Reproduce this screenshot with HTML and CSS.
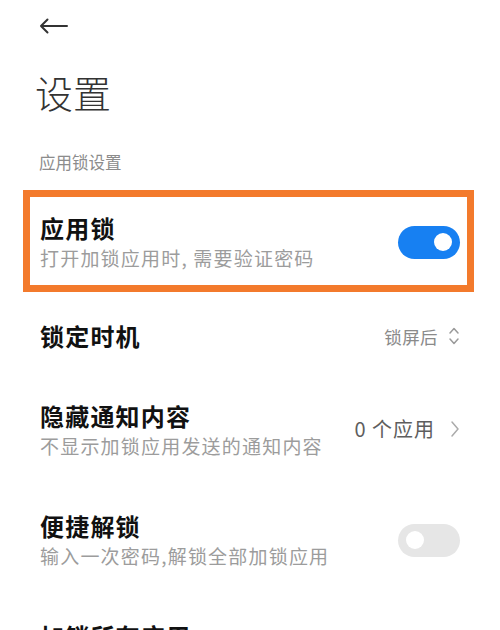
FILE: index.html
```html
<!DOCTYPE html>
<html lang="zh-CN">
<head>
<meta charset="utf-8">
<title>设置</title>
<link rel="stylesheet" href="styles.css">
</head>
<body>
<div class="page">
  <header class="topbar">
    <svg class="back" width="30" height="16" viewBox="0 0 30 16" aria-hidden="true">
      <path d="M2 8 H28 M8.5 1.5 L2 8 L8.5 14.5" fill="none" stroke="#333" stroke-width="2" stroke-linecap="round" stroke-linejoin="round"/>
    </svg>
  </header>
  <h1 class="title">设置</h1>
  <div class="section-label">应用锁设置</div>

  <div class="row row-two highlighted">
    <div class="text">
      <div class="row-title">应用锁</div>
      <div class="row-sub">打开加锁应用时, 需要验证密码</div>
    </div>
    <span class="switch on"><span class="knob"></span></span>
  </div>

  <div class="row row-one">
    <div class="text">
      <div class="row-title">锁定时机</div>
    </div>
    <div class="value value-light">锁屏后
      <svg class="updown" width="12" height="22" viewBox="0 0 12 22" aria-hidden="true">
        <path d="M2 8 L6 3.5 L10 8 M2 14 L6 18.5 L10 14" fill="none" stroke="#9a9a9a" stroke-width="1.5" stroke-linecap="round" stroke-linejoin="round"/>
      </svg>
    </div>
  </div>

  <div class="row row-two">
    <div class="text">
      <div class="row-title">隐藏通知内容</div>
      <div class="row-sub">不显示加锁应用发送的通知内容</div>
    </div>
    <div class="value value-dark">0 个应用
      <svg class="chev" width="10" height="18" viewBox="0 0 10 18" aria-hidden="true">
        <path d="M2 2 L8 9 L2 16" fill="none" stroke="#ababab" stroke-width="1.5" stroke-linecap="round" stroke-linejoin="round"/>
      </svg>
    </div>
  </div>

  <div class="row row-two">
    <div class="text">
      <div class="row-title">便捷解锁</div>
      <div class="row-sub">输入一次密码,解锁全部加锁应用</div>
    </div>
    <span class="switch"><span class="knob"></span></span>
  </div>

  <div class="row row-two">
    <div class="text">
      <div class="row-title">加锁所有应用</div>
      <div class="row-sub">打开后所有应用均需验证密码</div>
    </div>
    <span class="switch"><span class="knob"></span></span>
  </div>
</div>
</body>
</html>
```

FILE: styles.css
```css
html, body {
  margin: 0;
  padding: 0;
  background: #ffffff;
}

body {
  font-family: "Noto Sans CJK SC", "Noto Sans", "Liberation Sans", sans-serif;
  color: #111;
  overflow: hidden;
}

.page {
  width: 500px;
  height: 630px;
  overflow: hidden;
}

.topbar {
  height: 52px;
  display: flex;
  align-items: center;
  padding-left: 39px;
}

.back {
  display: block;
}

.title {
  margin: 15px 0 0 0;
  padding-left: 35px;
  font-size: 38px;
  line-height: 50px;
  font-weight: 300;
  color: #333;
}

.section-label {
  margin-top: 33px;
  padding-left: 39px;
  font-size: 16.5px;
  line-height: 24px;
  color: #8c8c8c;
  margin-bottom: 13px;
}

.row {
  position: relative;
  display: flex;
  align-items: center;
  justify-content: space-between;
  padding: 0 40px 0 40px;
  box-sizing: border-box;
}

.row-two {
  height: 110px;
}

.row-one {
  height: 78px;
}

.highlighted::after {
  content: "";
  position: absolute;
  left: 23px;
  top: 3px;
  width: 451px;
  height: 102px;
  box-sizing: border-box;
  border: 7px solid #f37a2c;
  pointer-events: none;
}

.row-title {
  font-size: 24px;
  line-height: 32px;
  letter-spacing: 1.2px;
  font-weight: 700;
  color: #111;
}

.row-sub {
  font-size: 19px;
  line-height: 28px;
  letter-spacing: 1.2px;
  color: #9c9c9c;
}

.switch {
  width: 62px;
  height: 33px;
  border-radius: 17px;
  background: #e6e6e6;
  display: flex;
  align-items: center;
  padding: 0 8px;
  box-sizing: border-box;
  flex-shrink: 0;
}

.switch.on {
  background: #1780f2;
  justify-content: flex-end;
}

.knob {
  width: 18px;
  height: 18px;
  border-radius: 50%;
  background: #fff;
}

.value {
  display: flex;
  align-items: center;
  gap: 10px;
}

.value-light {
  font-size: 17.5px;
  letter-spacing: 0.4px;
  color: #8a8a8a;
}

.value-dark {
  font-size: 20px;
  letter-spacing: 1px;
  color: #5e5e5e;
  gap: 15px;
  margin-top: -3px;
}

.updown, .chev {
  display: block;
}
```
